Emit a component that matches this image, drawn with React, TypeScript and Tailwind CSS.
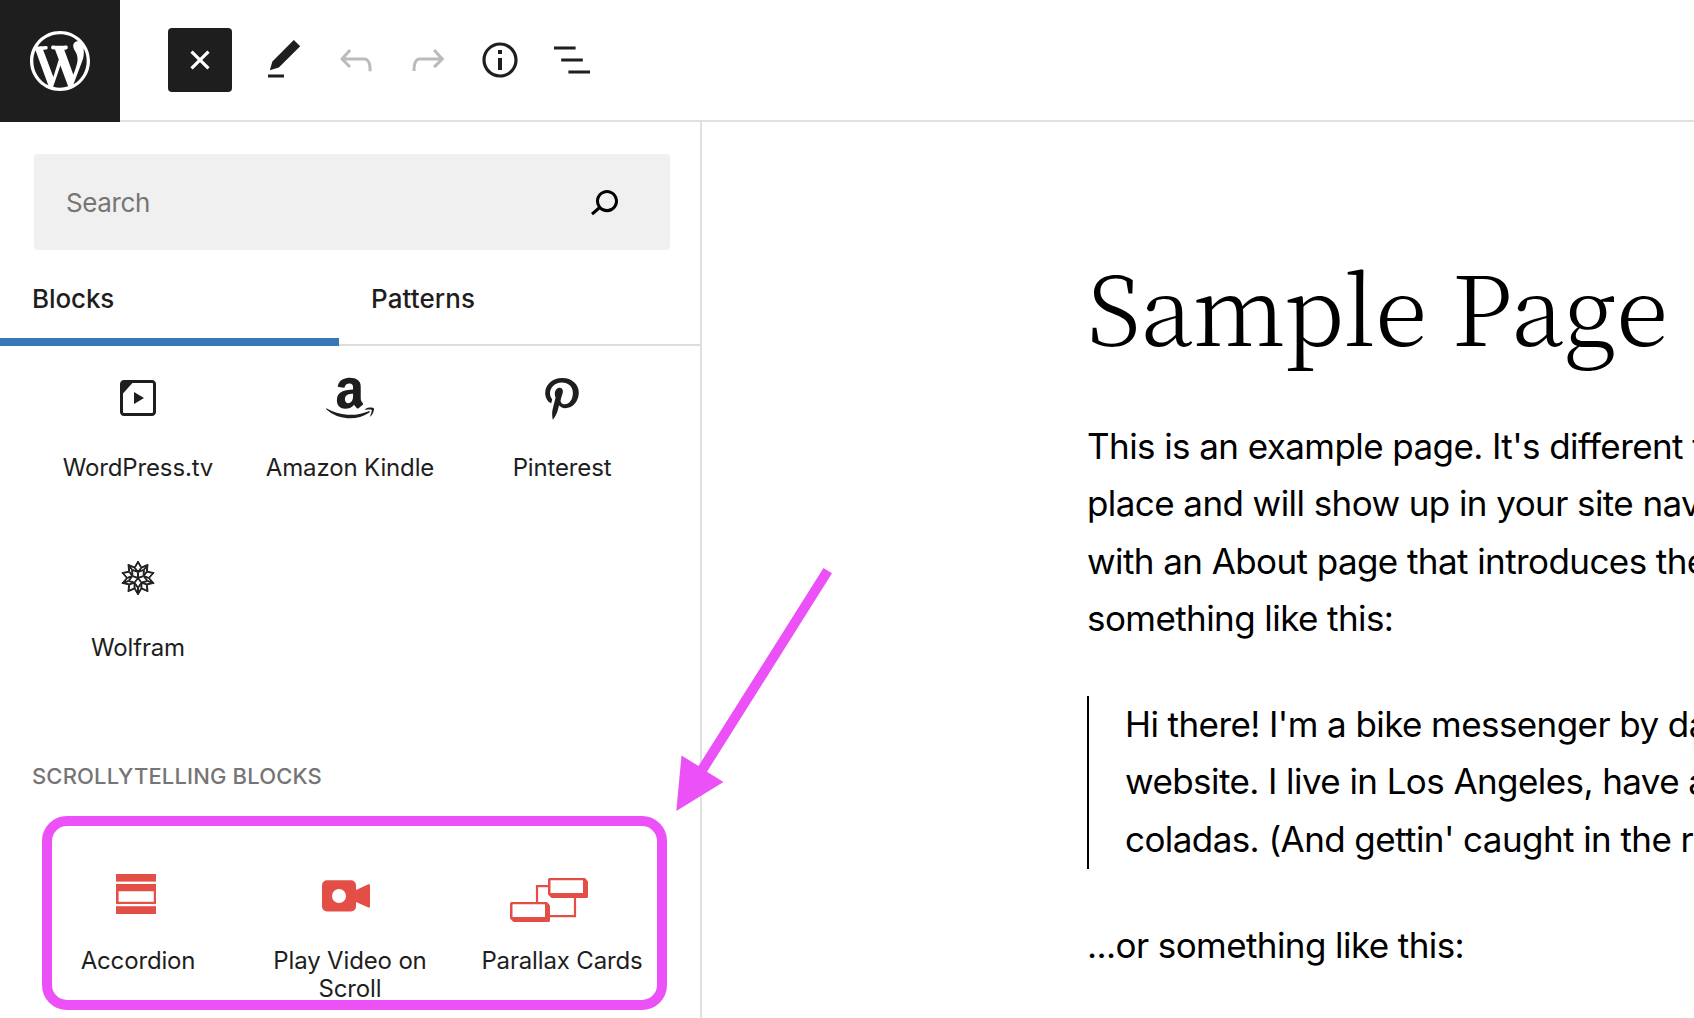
import type { ReactNode } from "react";
import { SiWolfram } from "react-icons/si";

function Icon({ d, className = "" }: { d: string | string[]; className?: string }) {
  const paths = Array.isArray(d) ? d : [d];
  return (
    <svg viewBox="0 0 24 24" fill="currentColor" className={`size-12 shrink-0 ${className}`}>
      {paths.map((p) => (
        <path key={p} d={p} />
      ))}
    </svg>
  );
}

const icons = {
  plus: "M18 11.2h-5.2V6h-1.6v5.2H6v1.6h5.2V18h1.6v-5.2H18z",
  edit: "M20.1 5.1L16.9 2 6.2 12.7l-1.3 4.4 4.5-1.3L20.1 5.1zM4 20.8h8v-1.5H4v1.5z",
  undo: "M18.3 11.7c-.6-.6-1.4-.9-2.3-.9H6.7l2.9-3.3-1.1-1-4.5 5L8.5 16l1-1-2.7-2.7H16c.5 0 .9.2 1.3.5 1 1 1 3.4 1 4.5v.3h1.5v-.2c0-1.5 0-4.3-1.5-5.7z",
  redo: "M15.6 6.5l-1.1 1 2.9 3.3H8c-.9 0-1.7.3-2.3.9-1.4 1.5-1.4 4.2-1.4 5.6v.2h1.5v-.3c0-1.1 0-3.5 1-4.5.3-.3.7-.5 1.3-.5h9.2L14.5 15l1.1 1.1 4.6-4.6-4.6-5z",
  info: "M12 3.2c-4.8 0-8.8 3.9-8.8 8.8 0 4.8 3.9 8.8 8.8 8.8 4.8 0 8.8-3.9 8.8-8.8 0-4.8-4-8.8-8.8-8.8zm0 16c-4 0-7.2-3.3-7.2-7.2C4.8 8 8 4.8 12 4.8s7.2 3.3 7.2 7.2c0 4-3.2 7.2-7.2 7.2zM11 17h2v-6h-2v6zm0-8h2V7h-2v2z",
  list: "M13.8 5.2H3v1.5h10.8V5.2zm-3.6 12v1.5H21v-1.5H10.2zm7.2-6H6.6v1.5h10.8v-1.5z",
  search:
    "M13.5 6C10.5 6 8 8.5 8 11.5c0 1.1.3 2.1.9 3l-3.4 3 1 1.1 3.4-2.9c1 .9 2.2 1.4 3.6 1.4 3 0 5.5-2.5 5.5-5.5C19 8.5 16.5 6 13.5 6zm0 9.5c-2.2 0-4-1.8-4-4s1.8-4 4-4 4 1.8 4 4-1.8 4-4 4z",
  video:
    "M19 3H5c-1.1 0-2 .9-2 2v14c0 1.1.9 2 2 2h14c1.1 0 2-.9 2-2V5c0-1.1-.9-2-2-2zm.5 16c0 .3-.2.5-.5.5H5c-.3 0-.5-.2-.5-.5V9.8l4.7-5.3H19c.3 0 .5.2.5.5v14zM10 15l5-3-5-3v6z",
  amazon: [
    "M18.42 14.58c-.51-.66-1.05-1.23-1.05-2.5V7.87c0-1.8.15-3.45-1.2-4.68-1.05-1.02-2.79-1.35-4.14-1.35-2.6 0-5.52.96-6.12 4.14-.06.36.18.54.4.57l2.66.3c.24-.03.42-.27.48-.5.24-1.12 1.17-1.63 2.2-1.63.56 0 1.22.21 1.55.7.4.56.33 1.31.33 1.97v.36c-1.59.18-3.66.27-5.16.93a4.63 4.63 0 0 0-2.93 4.44c0 2.82 1.8 4.23 4.1 4.23 1.95 0 3.03-.45 4.53-1.98.51.72.66 1.08 1.59 1.83.18.09.45.09.63-.1v.04l2.1-1.8c.24-.21.2-.48.03-.75zm-5.4-1.2c-.45.75-1.14 1.23-1.92 1.23-1.05 0-1.65-.81-1.65-1.98 0-2.31 2.1-2.73 4.08-2.73v.6c0 1.05.03 1.92-.5 2.88z",
    "M21.69 19.2a17.62 17.62 0 0 1-21.6-1.57c-.23-.2 0-.5.28-.33a23.88 23.88 0 0 0 20.93 1.3c.45-.19.84.3.39.6z",
    "M22.8 17.96c-.36-.45-2.22-.2-3.1-.12-.23.03-.3-.18-.05-.36 1.5-1.05 3.96-.75 4.26-.39.3.36-.1 2.82-1.5 4.02-.21.18-.42.1-.3-.15.3-.8 1.02-2.58.69-3z",
  ],
  pinterest:
    "M12.289,2C6.617,2,3.606,5.648,3.606,9.622c0,1.846,1.025,4.146,2.666,4.878c0.25,0.111,0.381,0.063,0.439-0.169 c0.044-0.175,0.267-1.029,0.365-1.428c0.032-0.128,0.017-0.237-0.091-0.362C6.445,11.911,6.01,10.75,6.01,9.668 c0-2.777,2.194-5.464,5.933-5.464c3.23,0,5.49,2.108,5.49,5.122c0,3.407-1.794,5.768-4.13,5.768c-1.291,0-2.257-1.021-1.948-2.277 c0.372-1.495,1.089-3.112,1.089-4.191c0-0.967-0.542-1.775-1.663-1.775c-1.319,0-2.379,1.309-2.379,3.059 c0,1.115,0.394,1.869,0.394,1.869s-1.302,5.279-1.54,6.261c-0.405,1.666,0.053,4.368,0.094,4.604 c0.021,0.126,0.167,0.169,0.25,0.063c0.129-0.165,1.699-2.419,2.142-4.051c0.158-0.59,0.817-2.995,0.817-2.995 c0.43,0.784,1.681,1.446,3.013,1.446c3.963,0,6.822-3.494,6.822-7.833C20.394,5.112,16.849,2,12.289,2",
  wordpress:
    "M20 10c0-5.51-4.49-10-10-10C4.48 0 0 4.49 0 10c0 5.52 4.48 10 10 10 5.51 0 10-4.48 10-10zM7.78 15.37L4.37 6.22c.55-.02 1.17-.08 1.17-.08.5-.06.44-1.13-.06-1.11 0 0-1.45.11-2.37.11-.18 0-.37 0-.58-.01C4.12 2.69 6.87 1.11 10 1.11c2.33 0 4.45.87 6.05 2.34-.68-.11-1.65.39-1.65 1.58 0 .74.45 1.36.9 2.1.35.61.55 1.36.55 2.46 0 1.49-1.4 5-1.4 5l-3.03-8.37c.54-.02.82-.17.82-.17.5-.05.44-1.25-.06-1.22 0 0-1.44.12-2.38.12-.87 0-2.33-.12-2.33-.12-.5-.03-.56 1.2-.06 1.22l.92.08 1.26 3.41zM17.41 10c.24-.64.74-1.87.43-4.25.7 1.29 1.05 2.71 1.05 4.25 0 3.29-1.73 6.24-4.4 7.78.97-2.59 1.94-5.2 2.92-7.78zM6.1 18.09C3.12 16.65 1.11 13.53 1.11 10c0-1.3.23-2.48.72-3.59C3.25 10.3 4.67 14.2 6.1 18.09zm4.03-6.63l2.58 6.98c-.86.29-1.76.45-2.71.45-.79 0-1.57-.11-2.29-.33.81-2.38 1.62-4.74 2.42-7.1z",
};

function AccordionIcon() {
  return (
    <svg viewBox="0 0 112 48" className="h-12 w-28 overflow-visible text-[#e34f47]" fill="currentColor">
      <rect x="34" y="7" width="40" height="7.6" />
      <path fillRule="evenodd" d="M34 17h40v20H34zM36.6 24.3v10.4h35.2V24.3z" />
      <rect x="34" y="39.2" width="40" height="7.8" />
    </svg>
  );
}

function VideoIcon() {
  return (
    <svg viewBox="0 0 112 48" className="h-12 w-28 overflow-visible text-[#e34f47]" fill="currentColor">
      <path
        fillRule="evenodd"
        d="M33 13.3h24a5 5 0 0 1 5 5v4.6l12.4-5.6q1.6-.5 1.6 1v21.2q0 1.5-1.6 1L62 35v4.5a5 5 0 0 1-5 5H33a5 5 0 0 1-5-5V18.3a5 5 0 0 1 5-5zM45 22a7 7 0 1 0 0 14 7 7 0 0 0 0-14z"
      />
    </svg>
  );
}

function CardsIcon() {
  return (
    <svg viewBox="0 0 112 48" className="h-12 w-28 overflow-visible text-[#e34f47]" fill="currentColor">
      <path d="M42 19.2H31V36M69 30v19.2H43" fill="none" stroke="currentColor" strokeWidth="2.2" />
      <path fillRule="evenodd" d="M43.5 11h35.5l3 3.5v15q0 1.5-1.5 1.5H45.5L42 27.5v-15q0-1.5 1.5-1.5zM44.5 13.2v12.8h32.5V13.2z" />
      <path fillRule="evenodd" d="M5.5 35h35.5l3 3.5v15q0 1.5-1.5 1.5H7.5L4 51.5v-15q0-1.5 1.5-1.5zM6.5 37.2v12.8h32.5V37.2z" />
    </svg>
  );
}

function Block({ icon, label }: { icon: ReactNode; label: string }) {
  return (
    <div className="flex h-[108px] flex-col items-center gap-8">
      <div className="flex h-12 shrink-0 items-center justify-center">{icon}</div>
      <span className="w-[180px] text-center text-2xl leading-7 tracking-[-0.15px]">{label}</span>
    </div>
  );
}

function Header() {
  return (
    <header className="flex h-[122px] shrink-0">
      <div className="flex w-[120px] items-center justify-center bg-[#1e1e1e] text-white">
        <svg viewBox="-2 -2 24 24" fill="currentColor" className="size-[72px]">
          <path d={icons.wordpress} />
        </svg>
      </div>
      <div className="flex flex-1 items-center border-b-2 border-[#e0e0e0] pl-12">
        <button className="mr-5 flex size-16 items-center justify-center rounded-[4px] bg-[#1e1e1e] text-white">
          <Icon d={icons.plus} className="rotate-45" />
        </button>
        <div className="flex items-center gap-6 pl-2">
          <Icon d={icons.edit} />
          <Icon d={icons.undo} className="text-[#bbbbbb]" />
          <Icon d={icons.redo} className="text-[#bbbbbb]" />
          <Icon d={icons.info} />
          <Icon d={icons.list} />
        </div>
      </div>
    </header>
  );
}

function Inserter() {
  return (
    <aside className="relative flex w-[702px] shrink-0 flex-col border-r-2 border-[#e0e0e0]">
      <div className="mt-8 mr-[30px] ml-[34px] flex h-24 shrink-0 items-center justify-between rounded-[4px] bg-[#f0f0f0] pr-[42px] pl-8">
        <span className="text-[26px] tracking-[-0.4px] text-[#757575]">Search</span>
        <Icon d={icons.search} className="text-black" />
      </div>
      <div className="flex h-24 shrink-0 text-[26px] font-[550]">
        <div className="flex w-[339px] items-center border-b-8 border-[#3779b6] pt-2 pl-8 tracking-[-0.1px]">Blocks</div>
        <div className="flex flex-1 items-center border-b-2 border-[#dddddd] pt-0.5 pl-8 tracking-[0.1px]">Patterns</div>
      </div>
      <div className="ml-8 grid w-[636px] grid-cols-3 gap-y-[72px] pt-7">
        <Block icon={<Icon d={icons.video} />} label="WordPress.tv" />
        <Block icon={<Icon d={icons.amazon} />} label="Amazon Kindle" />
        <Block icon={<Icon d={icons.pinterest} />} label="Pinterest" />
        <Block icon={<SiWolfram className="size-[34px] overflow-visible stroke-[#1e1e1e] stroke-[0.7]" />} label="Wolfram" />
      </div>
      <h2 className="mt-[100px] pl-8 text-[22px] leading-7 font-[550] tracking-[0.15px] text-[#757575]">
        SCROLLYTELLING BLOCKS
      </h2>
      <div className="mt-[77px] ml-8 grid w-[636px] grid-cols-3">
        <Block icon={<AccordionIcon />} label="Accordion" />
        <Block icon={<VideoIcon />} label="Play Video on Scroll" />
        <Block icon={<CardsIcon />} label="Parallax Cards" />
      </div>
      <div className="absolute top-[694px] left-[42px] h-[194px] w-[625px] rounded-[25px] border-10 border-[#ec51f8]" />
      <svg viewBox="0 0 160 246" className="absolute top-[444px] left-[675px] z-10 h-[246px] w-40" fill="#ec51f8">
        <path d="M148.5 2l8.5 5.3L32 205.7 48.5 216 1.3 245 6.5 189.5 23.5 200z" />
      </svg>
    </aside>
  );
}

function Page() {
  return (
    <main className="min-w-0 flex-1 overflow-hidden pt-32 pl-[385px] whitespace-nowrap text-black">
      <h1 className="font-['Noto_Serif_CJK_SC','Liberation_Serif',serif] text-[96px] leading-[109px] font-light tracking-[-0.25px]">
        Sample Page
      </h1>
      <div className="flex flex-col gap-12 pt-[58.5px] text-[35px] leading-[57.6px] tracking-[-0.58px]">
        <p>
          This is an example page. It's different from a blog post
          <br />
          place and will show up in your site navigation
          <br />
          with an About page that introduces them to potential
          <br />
          something like this:
        </p>
        <blockquote className="border-l-2 border-black pl-9">
          Hi there! I'm a bike messenger by day, aspiring actor
          <br />
          website. I live in Los Angeles, have a great dog
          <br />
          coladas. (And gettin' caught in the rain.)
        </blockquote>
        <p>...or something like this:</p>
      </div>
    </main>
  );
}

export default function App() {
  return (
    <div className="flex h-screen w-full flex-col overflow-hidden bg-white font-['Inter',sans-serif] text-[#1e1e1e]">
      <Header />
      <div className="flex min-h-0 flex-1">
        <Inserter />
        <Page />
      </div>
    </div>
  );
}
